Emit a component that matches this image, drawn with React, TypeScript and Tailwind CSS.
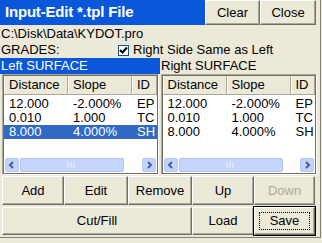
import React from "react";

const font = { fontFamily: '"Liberation Sans", Arial, sans-serif' };

function Btn({ label, className = "", disabled = false, focus = false }: { label: string; className?: string; disabled?: boolean; focus?: boolean }) {
  return (
    <div
      className={`flex items-center justify-center bg-[#ece9d8] border border-t-white border-l-white border-r-[#716f64] border-b-[#716f64] shadow-[inset_-1px_-1px_0_#aca899] text-[13px] ${disabled ? "text-[#aca899]" : "text-black"} ${focus ? "outline outline-1 outline-black" : ""} ${className}`}
    >
      {focus ? (
        <div className="border border-dotted border-black w-[calc(100%-8px)] h-[calc(100%-8px)] flex items-center justify-center">{label}</div>
      ) : (
        label
      )}
    </div>
  );
}

function HeaderCell({ label, className = "" }: { label: string; className?: string }) {
  return (
    <div className={`h-full flex items-center pl-[4px] bg-[#ece9d8] border-r border-r-[#aca899] border-l border-l-white ${className}`}>
      {label}
    </div>
  );
}

const rows = [
  ["12.000", "-2.000%", "EP"],
  ["0.010", "1.000", "TC"],
  ["8.000", "4.000%", "SH"],
];

function List({ selected }: { selected: number }) {
  return (
    <div className="flex-1 h-[101px] border border-t-[#aca899] border-l-[#aca899] border-r-white border-b-white">
      <div className="h-full border border-[#716f64] bg-white flex flex-col">
        <div className="h-[19px] flex text-[13px] border-b border-b-[#aca899] shrink-0">
          <HeaderCell label="Distance" className="w-[64px]" />
          <HeaderCell label="Slope" className="w-[64px]" />
          <HeaderCell label="ID" className="flex-1" />
        </div>
        <div className="flex-1 pt-[2px]">
          {rows.map((r, i) => (
            <div key={i} className={`flex h-[14px] leading-[14px] text-[13px] ${i === selected ? "bg-[#316ac5] text-white" : "text-black"}`}>
              <div className="w-[64px] pl-[5px]">{r[0]}</div>
              <div className="w-[64px] pl-[5px]">{r[1]}</div>
              <div className="flex-1 pl-[5px] overflow-hidden whitespace-nowrap">{r[2]}</div>
            </div>
          ))}
        </div>
        <div className="h-[16px] flex items-center px-[1px] bg-[#fefefe] shrink-0">
          <div className="w-[14px] h-[14px] rounded-[2px] bg-[#c1d3fb] border border-[#b7caf5] flex items-center justify-center">
            <svg width="8" height="8" viewBox="0 0 8 8"><path d="M5 1L2 4l3 3" stroke="#4d6185" strokeWidth="2" fill="none" /></svg>
          </div>
          <div className="w-[104px] h-[14px] ml-[1px] rounded-[2px] bg-[#c6d5fc] border border-[#b0c4f4] flex items-center justify-center">
            <svg width="10" height="6" viewBox="0 0 10 6"><path d="M1 0v6M4 0v6M7 0v6" stroke="#eef3ff" strokeWidth="1" /></svg>
          </div>
          <div className="flex-1" />
          <div className="w-[14px] h-[14px] rounded-[2px] bg-[#c1d3fb] border border-[#b7caf5] flex items-center justify-center">
            <svg width="8" height="8" viewBox="0 0 8 8"><path d="M3 1l3 3-3 3" stroke="#4d6185" strokeWidth="2" fill="none" /></svg>
          </div>
        </div>
      </div>
    </div>
  );
}

export default function App() {
  return (
    <div className="w-[322px] h-[243px] bg-[#ece9d8]" style={font}>
      <div className="w-[321px] h-[238px] border-r border-b border-[#808080] flex flex-col">
        <div className="flex h-[25px]">
          <div className="flex-1 bg-[#0a58d9] text-white font-bold text-[15px] flex items-center pl-[5px] tracking-[-0.2px]">Input-Edit *.tpl File</div>
          <Btn label="Clear" className="w-[55px]" />
          <Btn label="Close" className="w-[56px]" />
          <div className="w-[4px]" />
        </div>
        <div className="h-[16px] leading-[16px] text-[13px] pl-[1px] mt-[1px]">C:\Disk\Data\KYDOT.pro</div>
        <div className="h-[16px] flex items-center text-[13px] pl-[1px]">
          <span className="w-[117px]">GRADES:</span>
          <div className="w-[11px] h-[11px] bg-white border border-[#1c5180] flex items-center justify-center">
            <svg width="9" height="9" viewBox="0 0 9 9"><path d="M1 4l2.5 2.5L8 1.5" stroke="#000" strokeWidth="2" fill="none" /></svg>
          </div>
          <span className="ml-[4px]">Right Side Same as Left</span>
        </div>
        <div className="h-[16px] flex text-[13px]">
          <div className="w-[160px] bg-[#0a58d9] text-white pl-[1px] leading-[16px]">Left SURFACE</div>
          <div className="pl-[1px] leading-[16px]">Right SURFACE</div>
        </div>
        <div className="flex gap-[2px] px-[2px] pr-[3px]">
          <List selected={2} />
          <List selected={-1} />
        </div>
        <div className="flex flex-col gap-[2px] px-[2px] pr-[5px] mt-[1px]">
          <div className="flex h-[29px]">
            <Btn label="Add" className="w-[62px]" />
            <Btn label="Edit" className="w-[64px]" />
            <Btn label="Remove" className="w-[64px]" />
            <Btn label="Up" className="w-[62px]" />
            <Btn label="Down" className="flex-1" disabled />
          </div>
          <div className="flex h-[28px]">
            <Btn label="Cut/Fill" className="w-[190px]" />
            <Btn label="Load" className="w-[62px]" />
            <Btn label="Save" className="flex-1" focus />
          </div>
        </div>
      </div>
    </div>
  );
}
